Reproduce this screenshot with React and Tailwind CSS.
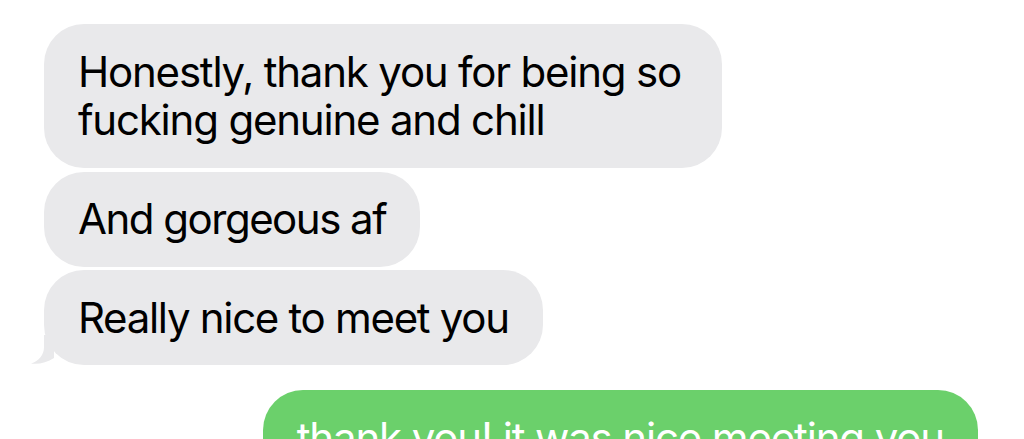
import React from "react";

export default function App() {
  const font = { fontFamily: "Inter, 'Noto Sans', 'Liberation Sans', sans-serif" };
  return (
    <div className="w-[1024px] h-[439px] overflow-hidden bg-white" style={font}>
      <div className="flex flex-col pt-[24px] pl-[44px] pr-[46px]">
        <div className="self-start w-[678px] rounded-[40px] bg-[#e9e9eb] px-[34px] py-[24px] text-[42px] leading-[48px] text-black tracking-[-1.2px]">
          Honestly, thank you for being so fucking genuine and chill
        </div>
        <div className="self-start mt-[4px] rounded-[40px] bg-[#e9e9eb] px-[34px] pt-[23px] pb-[24px] text-[42px] leading-[48px] text-black tracking-[-1.5px]">
          And gorgeous af
        </div>
        <div className="relative self-start mt-[3px] rounded-[40px] bg-[#e9e9eb] px-[34px] pt-[24px] pb-[23px] text-[42px] leading-[48px] text-black tracking-[-1.3px]">
          <svg
            className="absolute left-[-14px] bottom-0"
            width="40"
            height="30"
            viewBox="0 0 40 30"
          >
            <path
              d="M14 0 L14 12 C14 20 9 26 1 28.5 C9 29.5 17 27.5 24 23 L24 0 Z"
              fill="#e9e9eb"
            />
          </svg>
          <span className="relative">Really nice to meet you</span>
        </div>
        <div className="self-end mt-[25px] rounded-[40px] bg-[#6bd06b] px-[34px] pt-[24px] pb-[24px] text-[42px] leading-[48px] text-white tracking-[-1.15px] whitespace-nowrap">
          thank you! it was nice meeting you
        </div>
      </div>
    </div>
  );
}
